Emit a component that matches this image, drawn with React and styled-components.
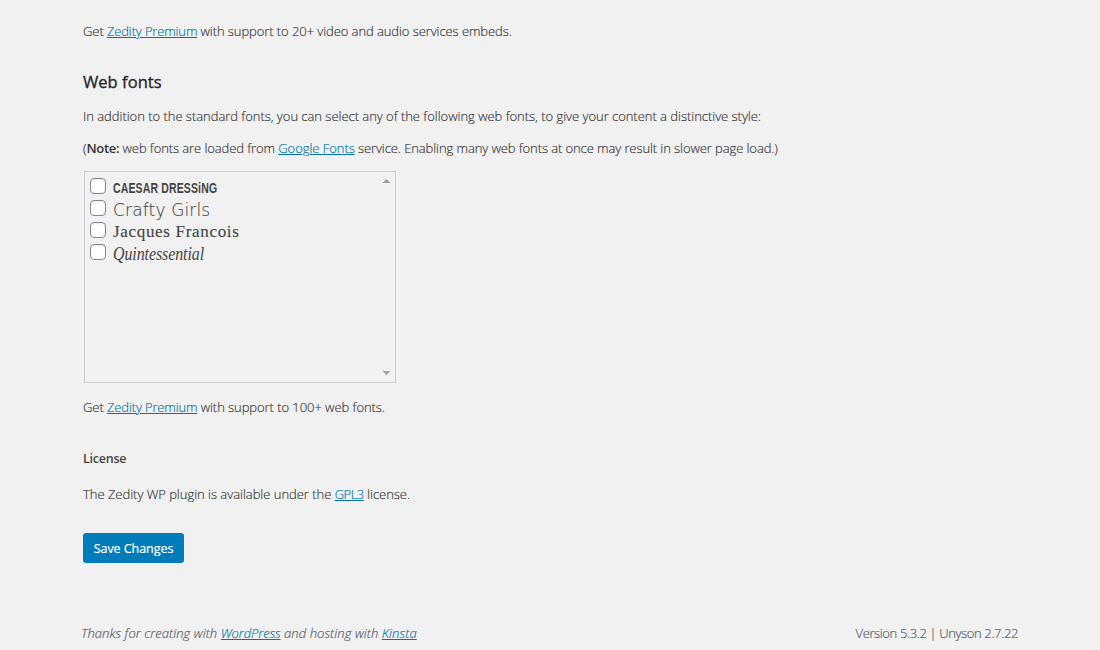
import React from 'react'
import styled, { createGlobalStyle } from 'styled-components'

const GlobalStyle = createGlobalStyle`
  *{
    box-sizing:border-box;
  }
  body{
    margin:0;
    background:#f1f1f1;
    color:#333;
    font-family:"Open Sans","Noto Sans",sans-serif;
    font-size:13px;
    font-weight:300;
    line-height:20px;
    -webkit-text-stroke:0.15px;
    overflow:hidden;
  }
`

const fonts = [
  { name: 'CAESAR DRESSiNG', family: '"Liberation Sans"', size: 15, weight: 700, track: 0.2, scale: 0.7 },
  { name: 'Crafty Girls', family: '"DejaVu Sans"', size: 17, weight: 200, track: 0.15, stroke: 0.1 },
  { name: 'Jacques Francois', family: '"Liberation Serif"', size: 17, weight: 400, track: 0.68, stroke: 0.15 },
  { name: 'Quintessential', family: '"Liberation Serif"', size: 19, weight: 400, italic: true, track: -0.1, scale: 0.84 },
]

function FontList() {
  return (
    <ListBox>
      <div>
        {fonts.map((font) => (
          <FontRow key={font.name}>
            <Checkbox type='checkbox' />
            <FontName $font={font}>{font.name}</FontName>
          </FontRow>
        ))}
      </div>
      <ScrollTrack>
        <svg width='7' height='4' shapeRendering='crispEdges'><path d='M3 0h1v1h1v1h1v1h1v1H0V3h1V2h1V1h1z' fill='#a3a3a3' /></svg>
        <svg width='7' height='4' shapeRendering='crispEdges'><path d='M0 0h7v1H6v1H5v1H4v1H3V3H2V2H1V1H0z' fill='#a3a3a3' /></svg>
      </ScrollTrack>
    </ListBox>
  )
}

function App() {
  return (
    <Page>
      <GlobalStyle />
      <Text $track={-0.08}>Get <Link href='#'>Zedity Premium</Link> with support to 20+ video and audio services embeds.</Text>
      <Title>Web fonts</Title>
      <Text $top={14} $track={-0.033}>In addition to the standard fonts, you can select any of the following web fonts, to give your content a distinctive style:</Text>
      <Text $top={12} $track={-0.09}>(<b>Note:</b> web fonts are loaded from <Link href='#' $track={-0.05}>Google Fonts</Link> service. Enabling many web fonts at once may result in slower page load.)</Text>
      <FontList />
      <Text $top={14} $track={-0.06}>Get <Link href='#'>Zedity Premium</Link> with support to 100+ web fonts.</Text>
      <SubTitle>License</SubTitle>
      <Text $top={15} $track={-0.03}>The Zedity WP plugin is available under the <Link href='#' $track={-0.5}>GPL3</Link> license.</Text>
      <SaveButton>Save Changes</SaveButton>
      <Footer>
        <Thanks>Thanks for creating with <Link href='#' $track={-0.05}>WordPress</Link> and hosting with <Link href='#' $track={0.1}>Kinsta</Link></Thanks>
        <Version>Version 5.3.2 | Unyson 2.7.22</Version>
      </Footer>
    </Page>
  )
}

const Page = styled.div`
  height:650px;
  padding:21px 82px 0 83px;
`
const Text = styled.p`
  margin:${({ $top }) => $top || 0}px 0 0;
  letter-spacing:${({ $track }) => $track}px;
  white-space:nowrap;
  b{
    font-weight:600;
    letter-spacing:-0.3px;
    -webkit-text-stroke:0;
  }
`
const Link = styled.a`
  color:#0073aa;
  letter-spacing:${({ $track }) => $track ?? -0.15}px;
  text-decoration:underline;
`
const Title = styled.h2`
  margin:31px 0 0;
  height:20px;
  color:#23282d;
  font-size:16.5px;
  font-weight:400;
  letter-spacing:0.05px;
  -webkit-text-stroke:0.35px;
`
const SubTitle = styled.h4`
  margin:32px 0 0;
  font-size:12.5px;
  font-weight:600;
  letter-spacing:-0.25px;
  color:#444;
  -webkit-text-stroke:0;
`
const ListBox = styled.div`
  display:flex;
  justify-content:space-between;
  width:312px;
  height:212px;
  margin:13px 0 0 1px;
  padding:4px 5px;
  border:1px solid #ccc;
`
const FontRow = styled.label`
  display:flex;
  align-items:flex-start;
  gap:7px;
  height:22px;
  padding-top:2px;
`
const Checkbox = styled.input`
  appearance:none;
  width:16px;
  height:16px;
  margin:0;
  border:1px solid #7e8993;
  border-radius:4px;
  background:#fff;
  box-shadow:inset 0 1px 2px rgba(0,0,0,.1);
`
const FontName = styled.span`
  color:#444;
  font-family:${({ $font }) => $font.family},serif;
  font-size:${({ $font }) => $font.size}px;
  font-weight:${({ $font }) => $font.weight};
  font-style:${({ $font }) => ($font.italic ? 'italic' : 'normal')};
  letter-spacing:${({ $font }) => $font.track}px;
  -webkit-text-stroke:${({ $font }) => $font.stroke || 0}px #444;
  line-height:20px;
  white-space:nowrap;
  transform:scaleX(${({ $font }) => $font.scale || 1});
  transform-origin:left;
`
const ScrollTrack = styled.div`
  display:flex;
  flex-direction:column;
  justify-content:space-between;
  padding:3px 0;
`
const SaveButton = styled.button`
  display:block;
  width:101px;
  height:30px;
  margin-top:29px;
  padding:1px 0 0;
  border:0;
  border-radius:3px;
  background:#007cba;
  color:#fff;
  font:400 12.5px/29px "Open Sans",sans-serif;
  letter-spacing:-0.05px;
  -webkit-text-stroke:0.2px;
`
const Footer = styled.footer`
  display:flex;
  justify-content:space-between;
  margin:60px 0 0 -2px;
  color:#50575e;
`
const Thanks = styled.em`
  letter-spacing:0.07px;
`
const Version = styled.span`
  letter-spacing:-0.37px;
`

export default App
